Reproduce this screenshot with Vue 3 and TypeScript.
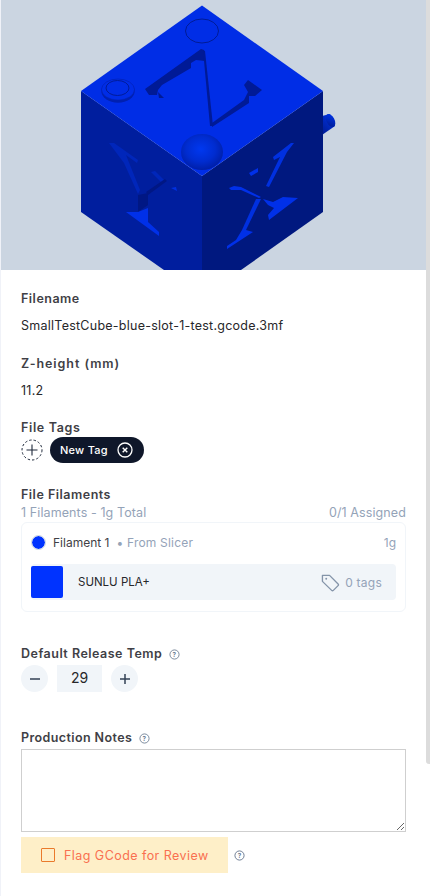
<script setup lang="ts">
const notes = ''
</script>

<template>
  <div class="page">
    <div class="scroll-thumb"></div>
    <div class="viewer">
      <svg class="cube" viewBox="0 0 426 270" width="426" height="270">
        <defs>
          <radialGradient id="ball" cx="47%" cy="42%" r="58%">
            <stop offset="0" stop-color="#0038f0" />
            <stop offset="0.6" stop-color="#002cd0" />
            <stop offset="1" stop-color="#001fa8" />
          </radialGradient>
          <linearGradient id="peg" x1="0" y1="1" x2="0.6" y2="0">
            <stop offset="0" stop-color="#001a90" />
            <stop offset="1" stop-color="#0032e0" />
          </linearGradient>
        </defs>
        <path d="M321 116 L329 114 L334 126 L321 135 Z" fill="url(#peg)" />
        <ellipse cx="329.5" cy="120.5" rx="4" ry="7" transform="rotate(-28 329.5 120.5)" fill="url(#peg)" />
        <polygon points="80,91 201,176 201,270 163,270 80,212" fill="#001e9e" />
        <polygon points="322,91 201,176 201,270 240,270 322,212" fill="#00187f" />
        <polygon points="201,5.5 322,91 201,176 80,91" fill="#002de6" />
        <!-- top face: two round pads -->
        <ellipse cx="201" cy="31" rx="16.5" ry="12" fill="#002de6" stroke="#001a8c" stroke-width="0.9" />
        <ellipse cx="117" cy="91" rx="16.7" ry="11.7" fill="#0020b0" />
        <ellipse cx="117" cy="89.5" rx="16.5" ry="10.5" fill="#002de6" stroke="#0020b0" stroke-width="0.6" />
        <ellipse cx="116.5" cy="88" rx="11.5" ry="7.5" fill="none" stroke="#001a90" stroke-width="0.9" />
        <!-- Z recess -->
        <polygon points="144,89 200,49 203,50 204,61 195,60 190,63 190,68 161,85 157,90 156,95 148,95" fill="#001a96" />
        <polygon points="157,92 163,98 158,98" fill="#001a96" />
        <polygon points="202,50 204,51 212,126 209,126" fill="#001a96" />
        <polygon points="211,123 243,100 247,92 243,85 247,80 261,90 254,96 248,96 248,103 211,127" fill="#001a96" />
        <!-- Y on left face -->
        <polygon points="108,143 113,143 137,160 136,163 125,155 139,190 137,194 123,163" fill="#0026ba" />
        <polygon points="150,172 154,171 163,180 160,182" fill="#0026ba" />
        <polygon points="170,188 175,187 176,191" fill="#0030e0" />
        <polygon points="145,192 164,179 166,181 147,195" fill="#001784" />
        <polygon points="137,195 147,193 147,205 137,212" fill="#001784" />
        <polygon points="125,212 137,212 147,208 147,222 158,232 158,236" fill="#0030e8" />
        <!-- X on right face -->
        <polygon points="293,143 290,143 272,157 273,160 279,157 265,186 268,187 286,152" fill="#0030e0" />
        <polygon points="248,173 257,168 257,172 250,176" fill="#0030e8" />
        <polygon points="228,188 233,186 240,187 260,197 258,198 240,190 230,190" fill="#0030e8" />
        <polygon points="262,199 272,202 282,197 297,198 268,220 267,215 273,208 267,205" fill="#0030e8" />
        <polygon points="255,199 260,199 245,230 241,230" fill="#0030e0" />
        <polygon points="226,246 235,240 241,230 245,230 252,232 226,249" fill="#0030e8" />
        <ellipse cx="201" cy="152" rx="21" ry="18" fill="url(#ball)" />
      </svg>
    </div>

    <main class="content">
      <section class="field filename">
        <h3 class="label">Filename</h3>
        <p class="value">SmallTestCube-blue-slot-1-test.gcode.3mf</p>
      </section>

      <section class="field zheight">
        <h3 class="label">Z-height (mm)</h3>
        <p class="value">11.2</p>
      </section>

      <section class="field tags">
        <h3 class="label">File Tags</h3>
        <div class="tag-row">
          <button class="tag-add" type="button" aria-label="Add tag">
            <svg viewBox="0 0 22 22" width="22" height="22">
              <circle cx="11" cy="11" r="10" fill="none" stroke="#1e293b" stroke-width="1" stroke-dasharray="2.4 2" />
              <path d="M5.5 11h11M11 5.5v11" stroke="#1e293b" stroke-width="1.1" />
            </svg>
          </button>
          <span class="chip">
            New Tag
            <svg viewBox="0 0 16 16" width="16" height="16">
              <circle cx="8" cy="8" r="7" fill="none" stroke="#fff" stroke-width="1.3" />
              <path d="M5.7 5.7l4.6 4.6M10.3 5.7l-4.6 4.6" stroke="#fff" stroke-width="1.4" />
            </svg>
          </span>
        </div>
      </section>

      <section class="field filaments">
        <h3 class="label">File Filaments</h3>
        <div class="sub-row">
          <span>1 Filaments - 1g Total</span>
          <span>0/1 Assigned</span>
        </div>
        <div class="card">
          <div class="card-head">
            <span class="dot"></span>
            <span class="fil-name">Filament 1</span>
            <span class="fil-src">• From Slicer</span>
            <span class="fil-weight">1g</span>
          </div>
          <div class="material">
            <span class="swatch"></span>
            <span class="mat-name">SUNLU PLA+</span>
            <span class="mat-tags">
              <svg viewBox="0 0 20 20" width="19" height="19" fill="none" stroke="#8494a9" stroke-width="1.4">
                <path d="M1.5 2.5h7.5l9 9a1.3 1.3 0 0 1 0 1.8l-5 5a1.3 1.3 0 0 1-1.8 0l-9.7-9.5z" stroke-linejoin="round" />
                <circle cx="5.5" cy="6" r="1" fill="#8494a9" stroke="none" />
              </svg>
              0 tags
            </span>
          </div>
        </div>
      </section>

      <section class="field temp">
        <h3 class="label help-label">
          Default Release Temp
          <svg class="help" viewBox="0 0 12 12" width="11" height="11">
            <circle cx="6" cy="6" r="5" fill="none" stroke="#64748b" stroke-width="0.9" />
            <text x="6" y="8.4" text-anchor="middle" font-size="7" fill="#64748b" font-family="Inter, sans-serif">?</text>
          </svg>
        </h3>
        <div class="stepper">
          <button class="round" type="button" aria-label="Decrease">
            <svg viewBox="0 0 14 14" width="14" height="14"><path d="M2 7h10" stroke="#334155" stroke-width="1.5" /></svg>
          </button>
          <span class="step-value">29</span>
          <button class="round" type="button" aria-label="Increase">
            <svg viewBox="0 0 14 14" width="14" height="14"><path d="M2 7h10M7 2v10" stroke="#334155" stroke-width="1.5" /></svg>
          </button>
        </div>
      </section>

      <section class="field notes">
        <h3 class="label help-label">
          Production Notes
          <svg class="help" viewBox="0 0 12 12" width="11" height="11">
            <circle cx="6" cy="6" r="5" fill="none" stroke="#64748b" stroke-width="0.9" />
            <text x="6" y="8.4" text-anchor="middle" font-size="7" fill="#64748b" font-family="Inter, sans-serif">?</text>
          </svg>
        </h3>
        <textarea class="notes-input" :value="notes"></textarea>
      </section>

      <div class="flag-row">
        <label class="flag">
          <span class="check"></span>
          Flag GCode for Review
        </label>
        <svg class="flag-help" viewBox="0 0 12 12" width="11" height="11">
          <circle cx="6" cy="6" r="5" fill="none" stroke="#64748b" stroke-width="1" />
          <text x="6" y="8.4" text-anchor="middle" font-size="7" font-weight="600" fill="#64748b" font-family="Inter, sans-serif">?</text>
        </svg>
      </div>
    </main>
  </div>
</template>

<style>
html, body { margin: 0; background: #fff; overflow: hidden; }
</style>

<style scoped>
* { box-sizing: border-box; }
.page {
  position: relative;
  width: 430px;
  height: 896px;
  overflow: hidden;
  background: #fff;
  padding-left: 1px;
  border-left: 1px solid #f0f2f8;
  font-family: Inter, "Noto Sans", sans-serif;
  color: #27272a;
}
.scroll-thumb {
  position: absolute;
  top: 0;
  right: 0;
  width: 4px;
  height: 764px;
  background: #dcdcdc;
  border-bottom-left-radius: 3px;
}
.viewer { height: 270px; width: 425px; margin-left: -1px; background: #cbd5e1; overflow: hidden; }
.cube { display: block; }
.content { width: 385px; margin-left: 19px; }
.field { display: block; }
.label { margin: 0; font-size: 12.5px; line-height: 18px; font-weight: 600; color: #3f3f46; letter-spacing: .5px; }
.value { margin: 0; font-size: 12.5px; line-height: 18px; color: #27272a; letter-spacing: .25px; }
.filename { padding-top: 20px; }
.filename .value { margin-top: 9px; }
.zheight { padding-top: 20px; }
.zheight .label { letter-spacing: .95px; }
.zheight .value { margin-top: 9px; }
.tags { padding-top: 19px; }
.tags .label { letter-spacing: .65px; }
.tag-row { display: flex; align-items: center; gap: 7px; }
.tag-add { width: 22px; height: 22px; padding: 0; border: 0; background: none; display: flex; }
.chip {
  display: inline-flex;
  align-items: center;
  justify-content: space-between;
  width: 94px;
  height: 26px;
  padding: 0 11px 0 10px;
  border-radius: 13px;
  background: #0f172a;
  color: #fff;
  font-size: 11px;
  font-weight: 500;
  letter-spacing: .25px;
}
.filaments { padding-top: 23px; }
.sub-row { display: flex; justify-content: space-between; font-size: 12.5px; line-height: 18px; color: #94a3b8; letter-spacing: .1px; }
.card { height: 90px; border: 1px solid #f1f5f9; border-radius: 6px; padding: 0 9px; }
.card-head { display: flex; align-items: center; height: 41px; padding-bottom: 2px; font-size: 12px; }
.dot { width: 15px; height: 15px; border-radius: 50%; background: #0033ff; margin-right: 7px; border: 1px solid #cbd5e1; background-clip: padding-box; }
.fil-name { color: #3f3f46; }
.fil-src { color: #94a3b8; margin-left: 7px; letter-spacing: .2px; }
.fil-weight { margin-left: auto; color: #94a3b8; }
.material { display: flex; align-items: center; height: 36px; background: #f1f5f9; border-radius: 4px; padding: 0 14px 0 0; }
.swatch { width: 32px; height: 32px; background: #0033ff; border-radius: 2px; }
.mat-name { margin-left: 15px; font-size: 11.5px; color: #27272a; }
.mat-tags { margin-left: auto; display: flex; align-items: center; gap: 5px; font-size: 12px; letter-spacing: .25px; color: #94a3b8; }
.temp { padding-top: 33px; }
.help-label { display: flex; align-items: center; gap: 7px; }
.stepper { display: flex; gap: 9px; margin-top: 2px; }
.round { width: 27px; height: 27px; border: 0; border-radius: 50%; background: #f1f5f9; padding: 0; display: flex; align-items: center; justify-content: center; }
.step-value { width: 45px; height: 27px; background: #f1f5f9; font-size: 14px; line-height: 26px; text-align: center; color: #27272a; }
.notes { padding-top: 37px; }
.notes .label { letter-spacing: .4px; }
.notes-input { display: block; width: 385px; height: 83px; margin-top: 2px; border: 1px solid #cfcfcf; background: #fff; outline: 0; padding: 4px; }
.flag-row { display: flex; align-items: center; gap: 6px; margin-top: 5px; }
.flag { display: flex; align-items: center; width: 207px; height: 36px; padding-left: 20px; gap: 9px; background: #feefc8; color: #f97050; font-size: 12.5px; letter-spacing: .45px; }
.check { width: 14px; height: 14px; border: 1px solid #ea7a2b; border-radius: 1px; }
</style>
